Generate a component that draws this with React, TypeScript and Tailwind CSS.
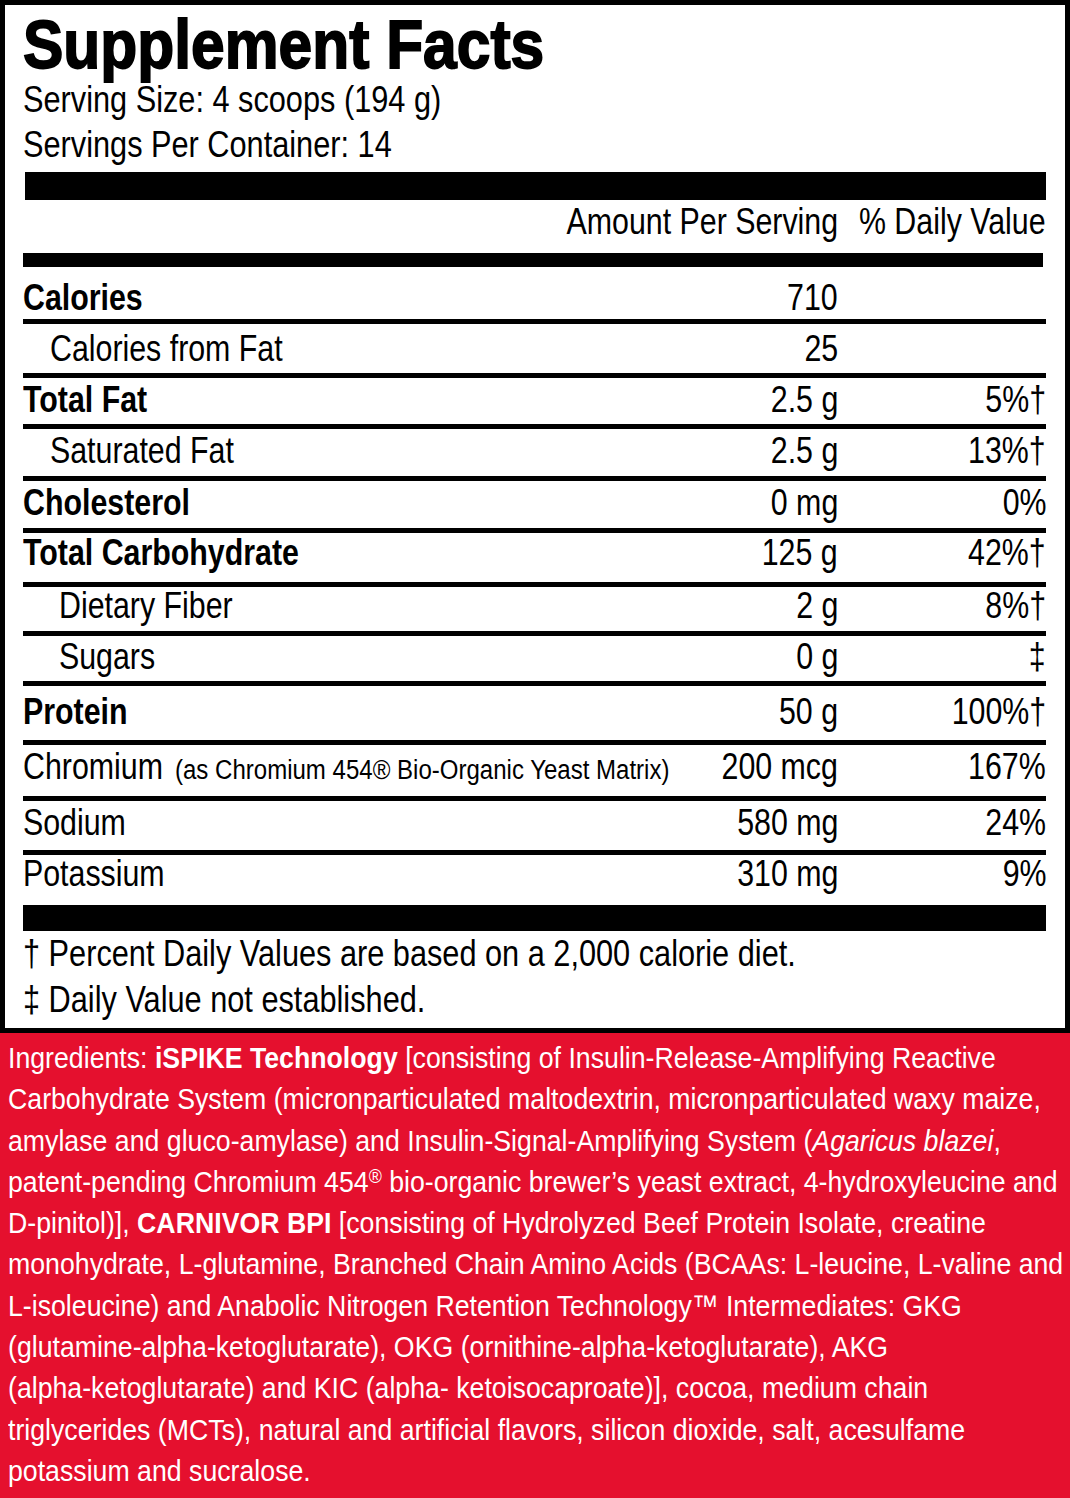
import React from "react";

// Liberation Sans squeezed horizontally stands in for the condensed face of the label
const N = ({
  s,
  right,
  className = "",
  children,
}: {
  s: string;
  right?: boolean;
  className?: string;
  children: React.ReactNode;
}) => (
  <span className={`inline-block whitespace-nowrap ${right ? "origin-right" : "origin-left"} ${s} ${className}`}>
    {children}
  </span>
);

type Row = {
  label: string;
  note?: string;
  bold?: boolean;
  indent?: string;
  amount: string;
  dv: string;
  box: string;
};

// box = row height (incl. rule) + top padding that puts the baseline where the label has it
const rows: Row[] = [
  { label: "Calories", bold: true, amount: "710", dv: "", box: "h-[57px] pt-[12px] border-b-[5px]" },
  { label: "Calories from Fat", indent: "pl-[27px]", amount: "25", dv: "", box: "h-[54px] pt-[6px] border-b-[5px]" },
  { label: "Total Fat", bold: true, amount: "2.5 g", dv: "5%†", box: "h-[51px] pt-[3px] border-b-[5px]" },
  { label: "Saturated Fat", indent: "pl-[27px]", amount: "2.5 g", dv: "13%†", box: "h-[52px] pt-[3px] border-b-[5px]" },
  { label: "Cholesterol", bold: true, amount: "0 mg", dv: "0%", box: "h-[52px] pt-[3px] border-b-[5px]" },
  { label: "Total Carbohydrate", bold: true, amount: "125 g", dv: "42%†", box: "h-[54px] pt-[1px] border-b-[5px]" },
  { label: "Dietary Fiber", indent: "pl-[36px]", amount: "2 g", dv: "8%†", box: "h-[49px] pt-0 border-b-[5px]" },
  { label: "Sugars", indent: "pl-[36px]", amount: "0 g", dv: "‡", box: "h-[50px] pt-[2px] border-b-[5px]" },
  { label: "Protein", bold: true, amount: "50 g", dv: "100%†", box: "h-[59px] pt-[7px] border-b-[5px]" },
  {
    label: "Chromium",
    note: "(as Chromium 454® Bio-Organic Yeast Matrix)",
    amount: "200 mcg",
    dv: "167%",
    box: "h-[56px] pt-[3px] border-b-[5px]",
  },
  { label: "Sodium", amount: "580 mg", dv: "24%", box: "h-[54px] pt-[3px] border-b-[5px]" },
  { label: "Potassium", amount: "310 mg", dv: "9%", box: "h-[50px] pt-0" },
];

const ingredients: React.ReactNode[] = [
  <>
    Ingredients: <b>iSPIKE Technology</b> [consisting of Insulin-Release-Amplifying Reactive
  </>,
  <>Carbohydrate System (micronparticulated maltodextrin, micronparticulated waxy maize,</>,
  <>
    amylase and gluco-amylase) and Insulin-Signal-Amplifying System (<i>Agaricus blazei</i>,
  </>,
  <>
    patent-pending Chromium 454<sup className="text-[20px] top-[-9px]">®</sup> bio-organic brewer’s yeast extract,
    4-hydroxyleucine and
  </>,
  <>
    D-pinitol)], <b>CARNIVOR BPI</b> [consisting of Hydrolyzed Beef Protein Isolate, creatine
  </>,
  <>monohydrate, L-glutamine, Branched Chain Amino Acids (BCAAs: L-leucine, L-valine and</>,
  <>L-isoleucine) and Anabolic Nitrogen Retention Technology™ Intermediates: GKG</>,
  <>(glutamine-alpha-ketoglutarate), OKG (ornithine-alpha-ketoglutarate), AKG</>,
  <>(alpha-ketoglutarate) and KIC (alpha- ketoisocaproate)], cocoa, medium chain</>,
  <>triglycerides (MCTs), natural and artificial flavors, silicon dioxide, salt, acesulfame</>,
  <>potassium and sucralose.</>,
];

export default function App() {
  return (
    <div className="w-[1070px] h-[1498px] overflow-hidden bg-[#e5102e] font-['Liberation_Sans',Arial,sans-serif] text-black">
      {/* facts panel */}
      <div className="h-[1033px] bg-white border-[5px] border-black pl-[18px] pr-[19px]">
        <h1 className="mt-[5px] text-[68px] leading-none font-bold">
          <N s="scale-x-[0.89]" className="[-webkit-text-stroke:1.8px_#000]">
            Supplement Facts
          </N>
        </h1>
        <div className="mt-[3px] text-[37px] leading-none">
          <N s="scale-x-[0.83]">Serving Size: 4 scoops (194 g)</N>
        </div>
        <div className="mt-[8px] text-[37px] leading-none">
          <N s="scale-x-[0.83]">Servings Per Container: 14</N>
        </div>

        <div className="mt-[9px] ml-[2px] h-[28px] bg-black" />

        <div className="h-[53px] pt-[3px] flex text-[37px] leading-none">
          <div className="flex-1 min-w-0 flex justify-end">
            <N s="scale-x-[0.82]" right>
              Amount Per Serving
            </N>
          </div>
          <div className="w-[208px] flex justify-end">
            <N s="scale-x-[0.82]" right>
              % Daily Value
            </N>
          </div>
        </div>

        <div className="mr-[3px] h-[14px] bg-black" />

        {rows.map((r) => (
          <div key={r.label} className={`flex items-start border-black text-[37px] leading-none ${r.box}`}>
            <div className={`flex-1 min-w-0 whitespace-nowrap ${r.indent ?? ""} ${r.bold ? "font-bold" : ""}`}>
              <N s="scale-x-[0.82]">{r.label}</N>
              {r.note && (
                <N s="scale-x-[0.89]" className="ml-[-19px] text-[27px]">
                  {r.note}
                </N>
              )}
            </div>
            <div className="w-[180px] flex justify-end">
              <N s="scale-x-[0.82]" right>
                {r.amount}
              </N>
            </div>
            <div className="w-[208px] flex justify-end">
              <N s="scale-x-[0.82]" right>
                {r.dv}
              </N>
            </div>
          </div>
        ))}

        <div className="h-[26px] bg-black" />

        <div className="mt-[4px] text-[37px] leading-none">
          <N s="scale-x-[0.83]">† Percent Daily Values are based on a 2,000 calorie diet.</N>
        </div>
        <div className="mt-[9px] text-[37px] leading-none">
          <N s="scale-x-[0.83]">‡ Daily Value not established.</N>
        </div>
      </div>

      {/* ingredients */}
      <div className="pt-[4px] pl-[8px] text-white text-[30px] leading-[41.3px]">
        {ingredients.map((line, i) => (
          <div key={i} className="whitespace-nowrap">
            <N s="scale-x-[0.89]">{line}</N>
          </div>
        ))}
      </div>
    </div>
  );
}
